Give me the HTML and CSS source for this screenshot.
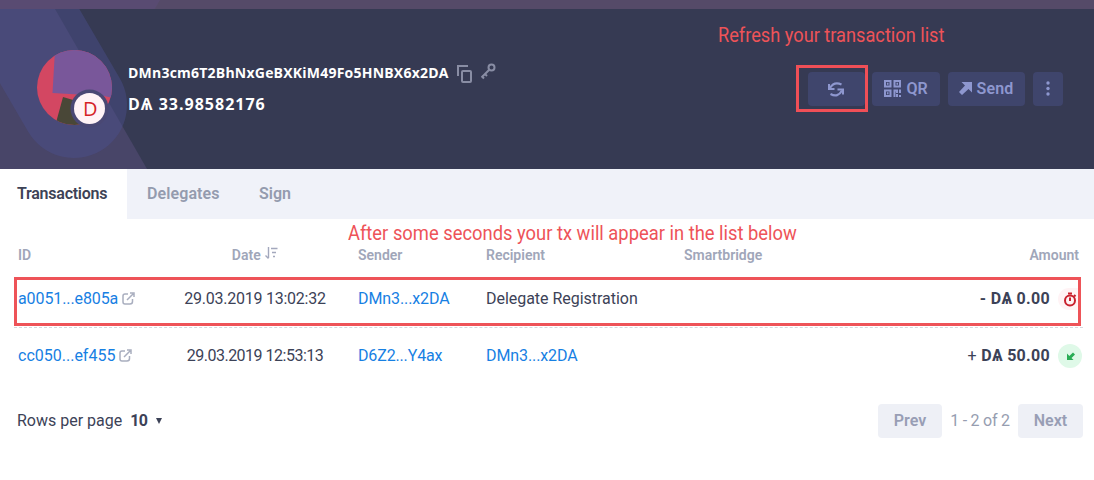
FILE: index.html
```html
<!DOCTYPE html>
<html lang="en">
<head>
<meta charset="utf-8">
<title>Wallet transactions</title>
<link rel="stylesheet" href="styles.css">
</head>
<body>
<div class="strip"></div>
<header class="header">
  <svg class="backdrop" width="160" height="160" viewBox="0 9 160 160">
    <path d="M0 9H55L147 169H0Z" fill="#484568"/>
    <path d="M-27 -68L74 105" fill="none" stroke="#4d5292" stroke-opacity=".42" stroke-width="106" stroke-linecap="round"/>
  </svg>
  <div class="avatar">
    <svg width="80" height="80" viewBox="0 0 80 80">
      <defs><clipPath id="face"><circle cx="37.500" cy="37.500" r="37.500"/></clipPath></defs>
      <g clip-path="url(#face)">
        <path d="M0 0H80V80H0Z" fill="#d34762"/>
        <path d="M18 0H80V49L67 46L15.500 43Z" fill="#79579a"/>
        <path d="M26 47L43 52V80H17Z" fill="#494737"/>
        <path d="M74 48L63 76H85Z" fill="#4a4874"/>
      </g>
      <circle cx="52.500" cy="58.500" r="19" fill="#4a4874"/>
      <circle cx="52.500" cy="58.500" r="15.500" fill="#fff3f6"/>
    </svg>
    <span class="letter">D</span>
  </div>
  <div class="wallet">
    <div class="address"><span class="hash">DMn3cm6T2BhNxGeBXKiM49Fo5HNBX6x2DA</span>
      <svg class="copy" width="15" height="18" viewBox="0 0 15 18" fill="none" stroke="#898da4" stroke-width="2"><path d="M1 11V1H11"/><rect x="5" y="6" width="9" height="11" rx="1"/></svg>
      <svg class="key" width="16" height="17" viewBox="0 0 16 17" fill="none" stroke="#898da4" stroke-width="2"><circle cx="11.500" cy="4.500" r="3"/><path d="M9 7L1.500 14.500M1.500 13L4 15.500M4.500 10.500L7 13"/></svg>
    </div>
    <div class="balance">DѦ 33.98582176</div>
  </div>
  <div class="side">
    <p class="note note-top">Refresh your transaction list</p>
    <div class="actions">
      <div class="frame"><button class="btn refresh"><svg width="16" height="15" viewBox="0 0 16 15" fill="none" stroke="#8e97cf" stroke-width="2.100"><path d="M2 6Q6 -1 13.500 2.500M14 8.500Q10 16 2.500 12"/><path d="M1 2V7H6.500M15 12.500V7.500H9.500"/></svg></button></div>
      <button class="btn qr"><svg width="17" height="17" viewBox="0 0 17 17" fill="none" stroke="#8e97cf" stroke-width="2"><path d="M1 1H6.500V6.500H1ZM10.500 1H16V6.500H10.500ZM1 10.500H6.500V16H1Z"/><path d="M3 3.750H4.500M12.500 3.750H14M3 13.250H4.500M10.500 17V10.500H13V13M16 9.500V13M13 14V17M16 15V17"/></svg><span>QR</span></button>
      <button class="btn send"><svg width="13" height="13" viewBox="0 0 13 13"><path d="M2.500 0H13V10.500L9.500 7L3 13L0 10L6 3.500Z" fill="#8e97cf"/></svg><span>Send</span></button>
      <button class="btn more"><svg width="4" height="15" viewBox="0 0 4 15" fill="#8e97cf"><circle cx="2" cy="2" r="1.700"/><circle cx="2" cy="7.500" r="1.700"/><circle cx="2" cy="13" r="1.700"/></svg></button>
    </div>
  </div>
</header>
<nav class="tabs"><a class="tab active">Transactions</a><a class="tab delegates">Delegates</a><a class="tab sign">Sign</a></nav>
<main class="main">
  <p class="note note-list">After some seconds your tx will appear in the list below</p>
  <div class="row head">
    <span>ID</span>
    <span class="date">Date <svg width="13" height="13" viewBox="0 0 13 13" fill="none" stroke="#a3a8bd" stroke-width="1.400"><path d="M3.500 0V11M.5 8.500L3.500 11.500M6 1.500H12.500M7 5.500H11M8 9.500H10"/></svg></span>
    <span>Sender</span><span>Recipient</span><span class="bridge">Smartbridge</span><span class="amount-head">Amount</span>
  </div>
  <div class="row selected">
    <span class="link id-a">a0051...e805a <svg class="ext" width="13" height="13" viewBox="0 0 13 13" fill="none" stroke="#a9aebf" stroke-width="1.500"><path d="M6 2H3Q1 2 1 4V10Q1 12 3 12H8Q10.500 12 10.500 9.500V7M5 8L11 2M8 1H12V5"/></svg></span>
    <span class="date">29.03.2019 13:02:32</span><span class="link addr">DMn3...x2DA</span><span class="kind">Delegate Registration</span><span></span>
    <span class="amount">- DѦ 0.00</span>
    <span class="status pending"><svg width="14" height="15" viewBox="0 0 14 15" fill="none" stroke="#c9202d" stroke-width="2"><circle cx="7" cy="8.500" r="5"/><path d="M7 5.500V9M5 1.500H9M11 3L12.500 4.500"/></svg></span>
  </div>
  <div class="row second">
    <span class="link id-b">cc050...ef455 <svg class="ext" width="13" height="13" viewBox="0 0 13 13" fill="none" stroke="#a9aebf" stroke-width="1.500"><path d="M6 2H3Q1 2 1 4V10Q1 12 3 12H8Q10.500 12 10.500 9.500V7M5 8L11 2M8 1H12V5"/></svg></span>
    <span class="date date-b">29.03.2019 12:53:13</span><span class="link addr-b">D6Z2...Y4ax</span><span class="link addr">DMn3...x2DA</span><span></span>
    <span class="amount amount-b"><i>+</i> DѦ 50.00</span>
    <span class="status received"><svg width="9" height="9" viewBox="0 0 9 9"><path d="M1 1.500V8H7.500L5.500 6L9 2.500L7 .5L3.300 4Z" fill="#29ad55"/></svg></span>
  </div>
  <footer class="footer">
    <span class="rows">Rows per page</span><b>10</b><span class="caret"></span>
    <button class="page prev">Prev</button><span class="range">1 - 2 of 2</span><button class="page next">Next</button>
  </footer>
</main>
</body>
</html>
```
FILE: styles.css
```css
* { box-sizing: border-box; }
body { margin: 0; width: 1094px; height: 480px; overflow: hidden; background: #fff; color: #3c4257; font: 16px/20px Roboto, "Noto Sans", sans-serif; }
p { margin: 0; }
button { border: 0; font: inherit; padding: 0; }
svg { flex: none; }
.strip { height: 9px; background: linear-gradient(120deg, #594b72 0 138px, #554a68 139px); }
.header { position: relative; display: flex; height: 160px; padding-left: 37px; background: #363a53; }
.backdrop { position: absolute; left: 0; top: 0; }
.avatar { position: relative; width: 91px; height: 80px; margin-top: 41px; flex: none; }
.letter { position: absolute; left: 46px; top: 48px; color: #d51f27; font: 20px/22px "Open Sans", sans-serif; }
.wallet { position: relative; padding-top: 54px; color: #fff; font-weight: 700; }
.address { display: flex; height: 20px; white-space: nowrap; align-items: center; }
.hash { width: 321px; font: 700 14px/20px "Open Sans", sans-serif; letter-spacing: .22px; }
.copy { margin-left: 8px; margin-top: 1px; }
.key { margin-left: 8px; margin-top: -4px; }
.balance { margin-top: 11px; font: 700 16px/20px "Open Sans", sans-serif; letter-spacing: 1px; }
.side { margin-left: auto; width: 376px; padding-top: 14px; }
.note { color: #ee5358; font: 20px/24px Roboto, sans-serif; white-space: nowrap; transform-origin: left center; }
.note-top { transform: scaleX(.91); }
.actions { display: flex; align-items: center; margin: 18px 0 0 78px; }
.frame { width: 72px; height: 47px; border: 3px solid #f04f57; padding: 4px 0 0 9px; }
.btn { display: flex; align-items: center; justify-content: center; height: 34px; border-radius: 4px; background: #3f456c; color: #8e97cf; font-weight: 600; }
.refresh { width: 57px; padding-right: 2px; }
.qr { width: 68px; margin-left: 4px; gap: 5px; }
.send { width: 77px; margin-left: 8px; gap: 4px; letter-spacing: .2px; }
.more { width: 30px; margin-left: 8px; }
.tabs { display: flex; height: 50px; background: #f0f2f9; font-weight: 600; color: #949bae; }
.tab { padding: 15px 20px; }
.active { width: 127px; padding-left: 17px; background: #fff; color: #3d4256; letter-spacing: -.25px; }
.delegates { width: 112px; letter-spacing: .1px; }
.main { padding: 2px 11px 0 14px; }
.note-list { height: 24px; margin-left: 334px; transform: scaleX(.918); }
.row { display: grid; grid-template-columns: 154px 190px 128px 198px 130px 1fr 33px; align-items: center; white-space: nowrap; }
.row > span:first-child { padding-left: 4px; }
.date { width: 174px; text-align: center; }
.row:not(.head) .date { letter-spacing: -.25px; }
.row:not(.head) .date-b { letter-spacing: -.5px; }
.head { height: 18px; color: #a0a6b9; font-size: 14px; font-weight: 600; }
.head .date svg { vertical-align: 0; margin-left: 1px; }
.amount-head { grid-column: 6 / 8; text-align: right; padding-right: 4px; }
.selected { position: relative; height: 49px; margin-top: 14px; margin-right: 2px; padding-bottom: 5px; border: 3px solid #ee5358; grid-template-columns: 151px 190px 128px 198px 130px 1fr 28px; }
.selected > span:first-child { padding-left: 1px; }
.second { height: 56px; border-top: 1px dashed #d6d8df; margin-top: 1px; padding-top: 1px; }
.link { color: #1780e3; }
.addr { letter-spacing: -.1px; }
.addr-b { letter-spacing: -.15px; }
.kind { letter-spacing: -.03px; }
.id-a { letter-spacing: -.1px; }
.ext { vertical-align: -1px; }
.amount { text-align: right; font-weight: 700; letter-spacing: .3px; }
.amount i { font-style: normal; font-weight: 400; }
.status { width: 24px; height: 24px; border-radius: 50%; display: flex; align-items: center; justify-content: center; justify-self: end; }
.pending { background: #fff3f5; width: 20px; height: 22px; border-radius: 11px 0 0 11px; padding-left: 3px; }
.received { background: #dff9e8; margin-right: 1px; }
.footer { display: flex; align-items: center; height: 34px; margin-top: 21px; padding-left: 3px; }
.footer b { margin-left: 8px; width: 17px; letter-spacing: -.7px; }
.caret { margin-left: 9px; border: 3px solid transparent; border-top: 6px solid #3c4257; border-bottom: 0; }
.page { height: 34px; width: 64px; background: #eef0f6; border-radius: 4px; color: #989eb5; font-weight: 600; }
.prev { margin-left: auto; }
.range { width: 76px; text-align: center; color: #969db0; letter-spacing: -.25px; }
.next { width: 65px; }
```
